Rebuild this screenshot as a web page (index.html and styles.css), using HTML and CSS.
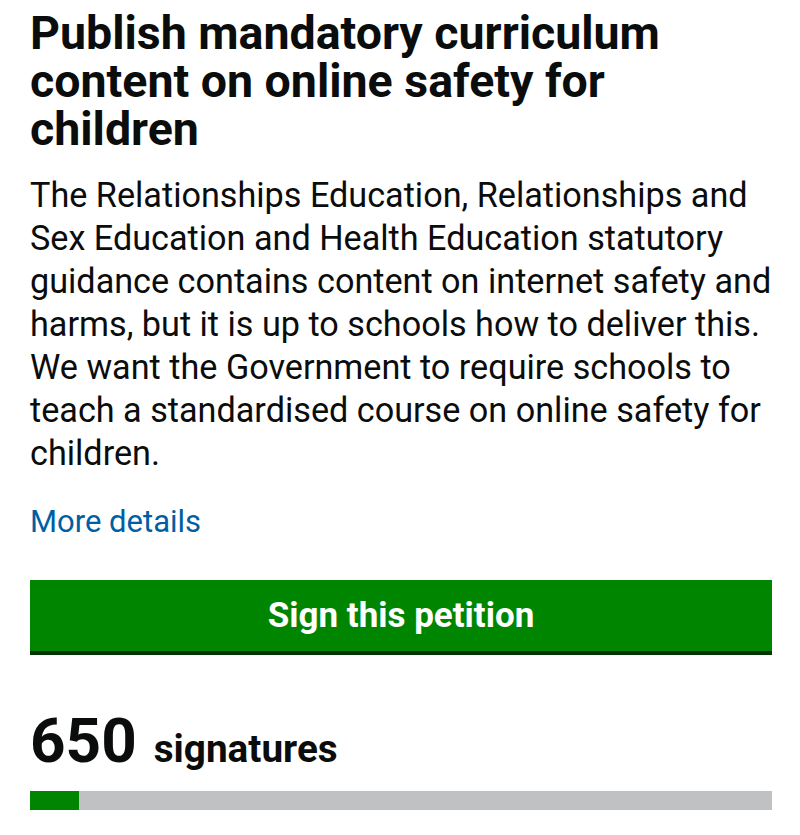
FILE: index.html
```html
<!DOCTYPE html>
<html lang="en">
<head>
<meta charset="utf-8">
<title>Petition</title>
<link rel="stylesheet" href="styles.css">
</head>
<body>
<main class="page">
  <h1 class="title">Publish mandatory curriculum content on online safety for children</h1>
  <p class="summary">The Relationships Education, Relationships and Sex Education and Health Education statutory guidance contains content on internet safety and harms, but it is up to schools how to deliver this. We want the Government to require schools to teach a standardised course on online safety for children.</p>
  <a class="more" href="#">More details</a>
  <button class="sign" type="button">Sign this petition</button>
  <div class="count"><span class="num">650</span><span class="label">signatures</span></div>
  <div class="progress"><div class="progress-fill" style="width: 6.6%"></div></div>
</main>
</body>
</html>
```
FILE: styles.css
```css
html, body {
  margin: 0;
  padding: 0;
  background: #ffffff;
}
body {
  font-family: Roboto, "Liberation Sans", sans-serif;
  color: #0b0c0c;
}
.page {
  padding: 9px 28px 0 30px;
  display: flex;
  flex-direction: column;
  align-items: flex-start;
}
.title {
  margin: 0;
  font-size: 46.5px;
  line-height: 48px;
  font-weight: 700;
}
.summary {
  margin: 21px 0 0;
  font-size: 34.2px;
  line-height: 43px;
  font-weight: 400;
}
.more {
  margin-top: 25px;
  font-size: 31px;
  line-height: 43px;
  color: #005ea5;
  text-decoration: none;
}
.sign {
  margin-top: 37px;
  align-self: stretch;
  height: 75px;
  border: 0;
  border-bottom: 4px solid #003300;
  background: #008500;
  color: #ffffff;
  font-family: Roboto, "Liberation Sans", sans-serif;
  font-size: 35px;
  font-weight: 700;
  padding: 0;
}
.count {
  margin-top: 55px;
  display: flex;
  align-items: baseline;
  gap: 17px;
}
.num {
  font-size: 62px;
  line-height: 62px;
  font-weight: 700;
}
.label {
  font-size: 38.7px;
  line-height: 39px;
  font-weight: 700;
}
.progress {
  align-self: stretch;
  margin-top: 19px;
  height: 19px;
  background: #bfc1c3;
}
.progress-fill {
  height: 100%;
  background: #008500;
}
```
